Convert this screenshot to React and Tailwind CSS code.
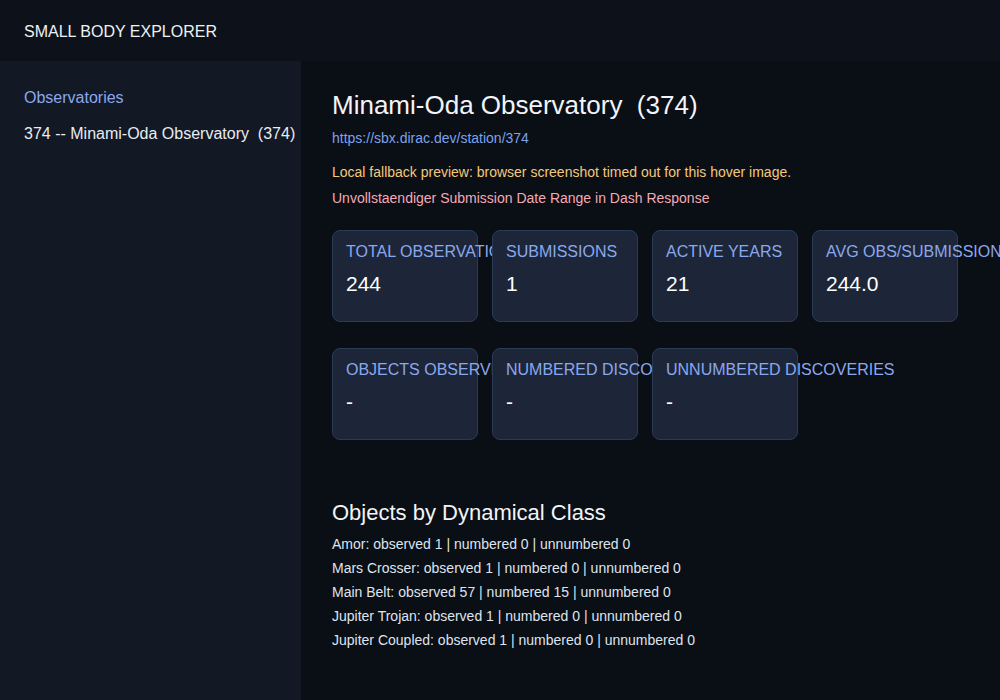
const stats = [
  [
    { label: 'Total Observations', value: '244' },
    { label: 'Submissions', value: '1' },
    { label: 'Active Years', value: '21' },
    { label: 'Avg Obs/Submission', value: '244.0' },
  ],
  [
    { label: 'Objects Observed', value: '-' },
    { label: 'Numbered Discoveries', value: '-' },
    { label: 'Unnumbered Discoveries', value: '-' },
  ],
]

const classes = [
  'Amor: observed 1 | numbered 0 | unnumbered 0',
  'Mars Crosser: observed 1 | numbered 0 | unnumbered 0',
  'Main Belt: observed 57 | numbered 15 | unnumbered 0',
  'Jupiter Trojan: observed 1 | numbered 0 | unnumbered 0',
  'Jupiter Coupled: observed 1 | numbered 0 | unnumbered 0',
]

function StatCard({ label, value }) {
  return (
    <div className="w-[146px] h-[92px] shrink-0 rounded-lg border border-[#2a3b58] bg-[#1d2638] px-[13px] pt-[12px]">
      <div className="whitespace-nowrap uppercase text-[16px] leading-[18px] text-[#8aa8ee]">{label}</div>
      <div className="mt-[11px] text-[21px] leading-[24px] text-white">{value}</div>
    </div>
  )
}

export default function App() {
  return (
    <div className="h-[700px] w-[1000px] overflow-hidden flex flex-col bg-[#0a0e15] font-['Liberation_Sans',Arial,sans-serif]">
      <header className="h-[61px] shrink-0 flex items-center px-6 pt-[2px] bg-[#0d1119] text-[16px] text-[#eef1f6]">
        SMALL BODY EXPLORER
      </header>
      <div className="flex flex-1 min-h-0">
        <aside className="w-[301px] shrink-0 bg-[#121824] px-6 pt-[28px]">
          <div className="text-[16px] leading-[18px] text-[#8aa8ee]">Observatories</div>
          <div className="mt-[18px] whitespace-pre text-[16px] leading-[18px] text-[#e8ecf3]">374 -- Minami-Oda Observatory  (374)</div>
        </aside>
        <main className="flex-1 min-w-0 pl-[31px] pt-[29px]">
          <h1 className="whitespace-pre text-[26px] leading-[30px] text-[#f2f4f8]">Minami-Oda Observatory  (374)</h1>
          <a className="mt-[10px] block text-[14px] leading-[16px] text-[#7ea2ea]">https://sbx.dirac.dev/station/374</a>
          <p className="mt-[18px] text-[14px] leading-[16px] text-[#f5c97a]">Local fallback preview: browser screenshot timed out for this hover image.</p>
          <p className="mt-[10px] text-[14px] leading-[16px] text-[#f4aab6]">Unvollstaendiger Submission Date Range in Dash Response</p>
          <div className="mt-[24px] flex flex-col gap-[26px]">
            {stats.map((row, i) => (
              <div key={i} className="flex gap-[14px]">
                {row.map(s => (
                  <StatCard key={s.label} label={s.label} value={s.value} />
                ))}
              </div>
            ))}
          </div>
          <h2 className="mt-[60px] text-[22px] leading-[25px] text-[#f2f4f8]">Objects by Dynamical Class</h2>
          <div className="mt-[7px]">
            {classes.map(line => (
              <div key={line} className="text-[14px] leading-[24px] text-[#dfe4ee]">{line}</div>
            ))}
          </div>
        </main>
      </div>
    </div>
  )
}
